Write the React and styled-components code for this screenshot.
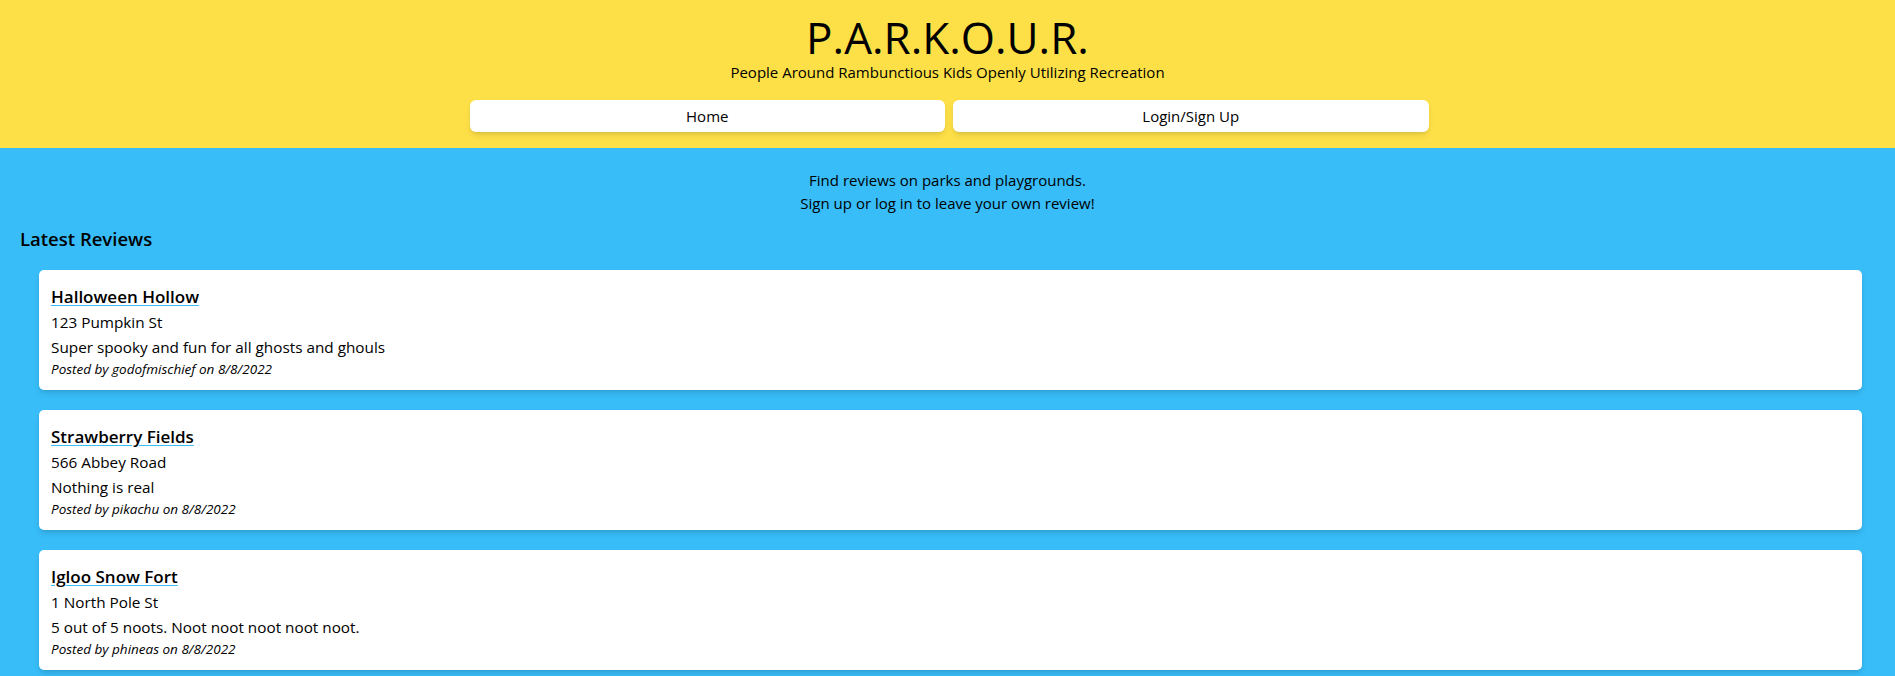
import React from "react";
import styled, { createGlobalStyle } from "styled-components";

const Global = createGlobalStyle`
  html, body { margin: 0; padding: 0; }
  body {
    font-family: "Open Sans", "Noto Sans", sans-serif;
    color: #000;
    background: #38bdf8;
  }
  * { box-sizing: border-box; }
`;

const Header = styled.header`
  background: #fde047;
  padding: 12px 0 16px;
  display: flex;
  flex-direction: column;
  align-items: center;
`;

const Title = styled.h1`
  margin: 0;
  font-size: 44px;
  font-weight: 400;
  line-height: 50px;
`;

const Subtitle = styled.p`
  margin: 0;
  font-size: 15px;
  line-height: 20px;
`;

const Nav = styled.nav`
  display: flex;
  width: 967px;
  margin-top: 18px;
  margin-left: 3px;
`;

const NavButton = styled.button`
  flex: 1;
  margin: 0 4px;
  height: 32px;
  border: none;
  border-radius: 6px;
  background: #fff;
  font-family: inherit;
  font-size: 15px;
  color: #000;
  box-shadow: 0 4px 6px -1px rgba(0,0,0,0.1), 0 2px 4px -2px rgba(0,0,0,0.1);
  cursor: pointer;
`;

const Main = styled.main`
  background: #38bdf8;
  padding: 21px 16px 24px 16px;
  min-height: 528px;
`;

const Intro = styled.p`
  margin: 0;
  text-align: center;
  font-size: 15px;
  line-height: 23px;
`;

const SectionTitle = styled.h2`
  margin: 10px 0 17px 4px;
  font-size: 18.5px;
  font-weight: 600;
  line-height: 28px;
`;

const List = styled.div`
  display: flex;
  flex-direction: column;
  gap: 20px;
  margin: 0 17px 0 23px;
`;

const Card = styled.article`
  background: #fff;
  border-radius: 5px;
  padding: 13px 12px 10px;
  height: 120px;
  box-shadow: 0 4px 6px -1px rgba(0,0,0,0.12), 0 2px 4px -2px rgba(0,0,0,0.1);
`;

const ParkName = styled.a`
  display: inline-block;
  font-size: 17px;
  font-weight: 600;
  line-height: 27px;
  color: #000;
  text-decoration: underline;
  text-decoration-color: #38bdf8;
  text-underline-offset: 2px;
`;

const Line = styled.p`
  margin: 0;
  font-size: 15.3px;
  line-height: 25px;
`;

const Meta = styled.p`
  margin: 0;
  font-size: 13.5px;
  font-style: italic;
  line-height: 19px;
`;

const reviews = [
  { name: "Halloween Hollow", address: "123 Pumpkin St", text: "Super spooky and fun for all ghosts and ghouls", user: "godofmischief", date: "8/8/2022" },
  { name: "Strawberry Fields", address: "566 Abbey Road", text: "Nothing is real", user: "pikachu", date: "8/8/2022" },
  { name: "Igloo Snow Fort", address: "1 North Pole St", text: "5 out of 5 noots. Noot noot noot noot noot.", user: "phineas", date: "8/8/2022" },
];

export default function App() {
  return (
    <>
      <Global />
      <Header>
        <Title>P.A.R.K.O.U.R.</Title>
        <Subtitle>People Around Rambunctious Kids Openly Utilizing Recreation</Subtitle>
        <Nav>
          <NavButton>Home</NavButton>
          <NavButton>Login/Sign Up</NavButton>
        </Nav>
      </Header>
      <Main>
        <Intro>Find reviews on parks and playgrounds.</Intro>
        <Intro>Sign up or log in to leave your own review!</Intro>
        <SectionTitle>Latest Reviews</SectionTitle>
        <List>
          {reviews.map((r) => (
            <Card key={r.name}>
              <ParkName href="#">{r.name}</ParkName>
              <Line>{r.address}</Line>
              <Line>{r.text}</Line>
              <Meta>Posted by {r.user} on {r.date}</Meta>
            </Card>
          ))}
        </List>
      </Main>
    </>
  );
}
